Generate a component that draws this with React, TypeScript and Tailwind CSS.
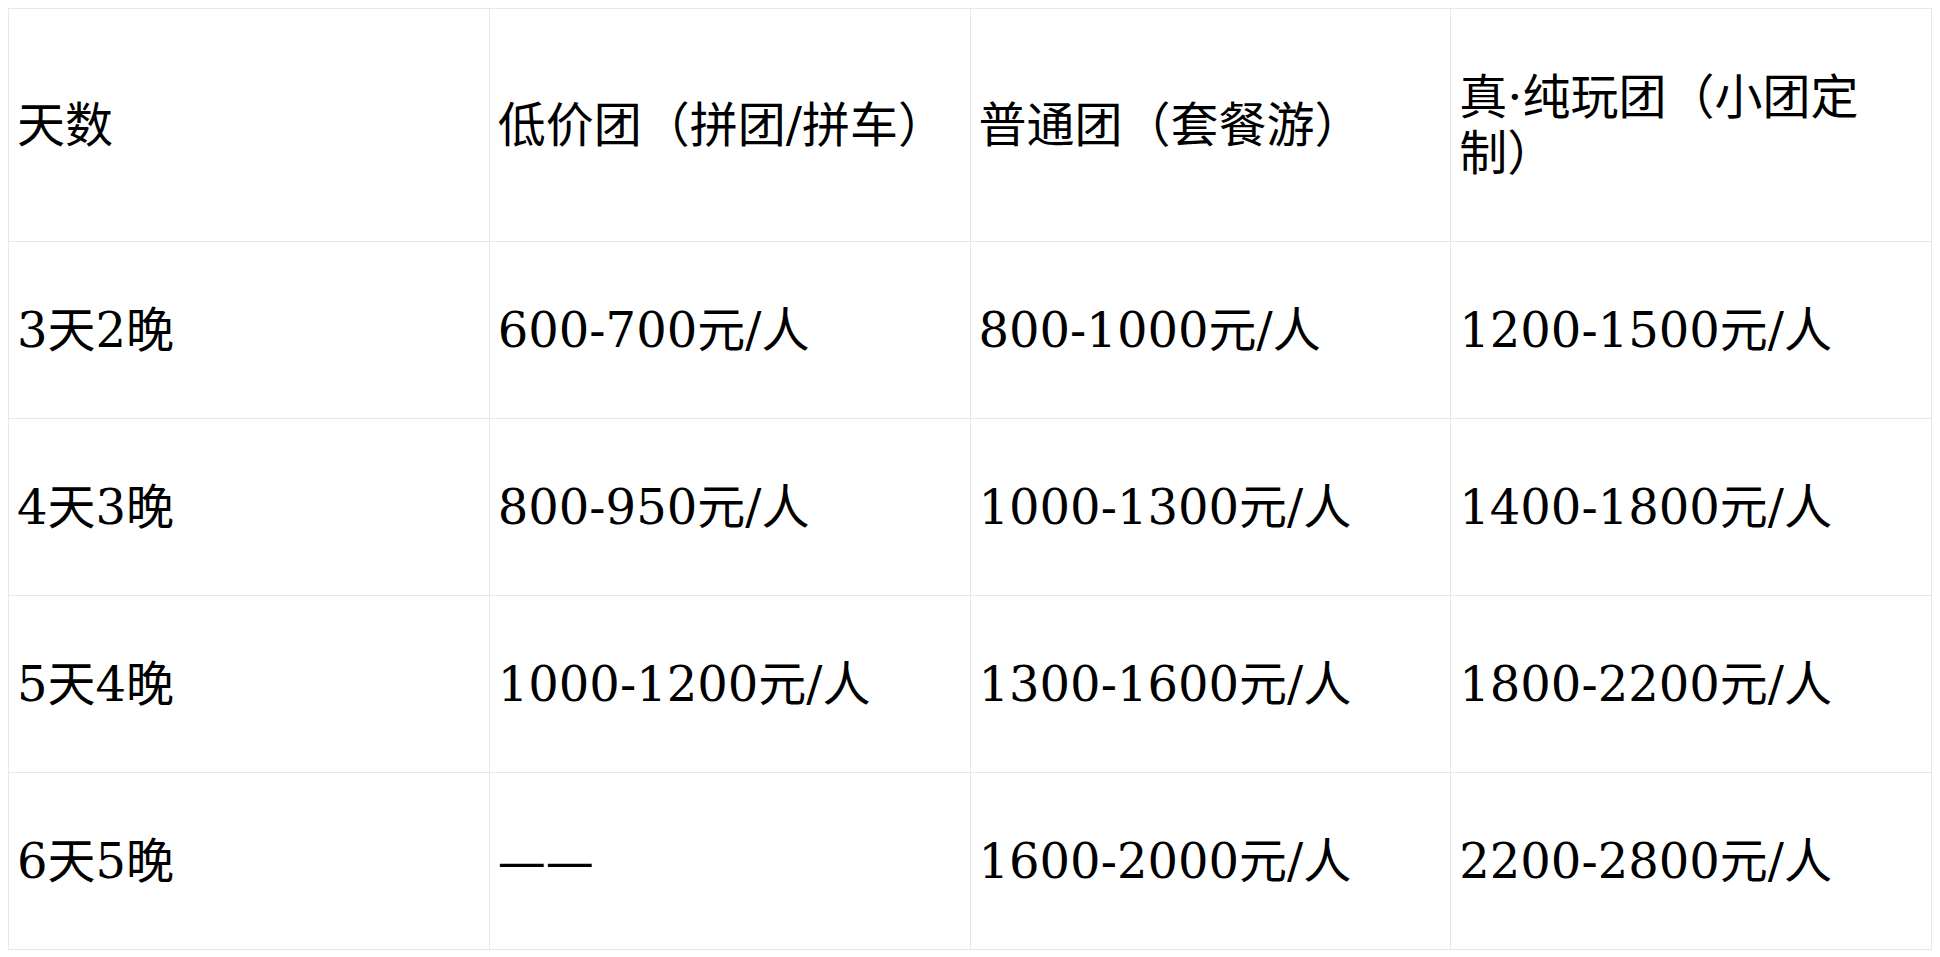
const header = ["天数", "低价团（拼团/拼车）", "普通团（套餐游）", "真·纯玩团（小团定制）"];

const rows = [
  ["3天2晚", "600-700元/人", "800-1000元/人", "1200-1500元/人"],
  ["4天3晚", "800-950元/人", "1000-1300元/人", "1400-1800元/人"],
  ["5天4晚", "1000-1200元/人", "1300-1600元/人", "1800-2200元/人"],
  ["6天5晚", "——", "1600-2000元/人", "2200-2800元/人"],
];

export default function App() {
  return (
    <div className="min-h-screen bg-white p-2 text-black font-['DejaVu_Serif','Noto_Sans_CJK_SC',serif]">
      <table className="w-full table-fixed border-collapse border border-gray-200 text-[48px] leading-[56px]">
        <thead>
          <tr>
            {header.map((h) => (
              <th key={h} className="border border-gray-200 px-2 py-[60px] text-left align-middle font-normal">
                {h}
              </th>
            ))}
          </tr>
        </thead>
        <tbody>
          {rows.map((r) => (
            <tr key={r[0]}>
              {r.map((c, i) => (
                <td key={i} className="border border-gray-200 px-2 py-[60px] align-middle">
                  {c}
                </td>
              ))}
            </tr>
          ))}
        </tbody>
      </table>
    </div>
  );
}
